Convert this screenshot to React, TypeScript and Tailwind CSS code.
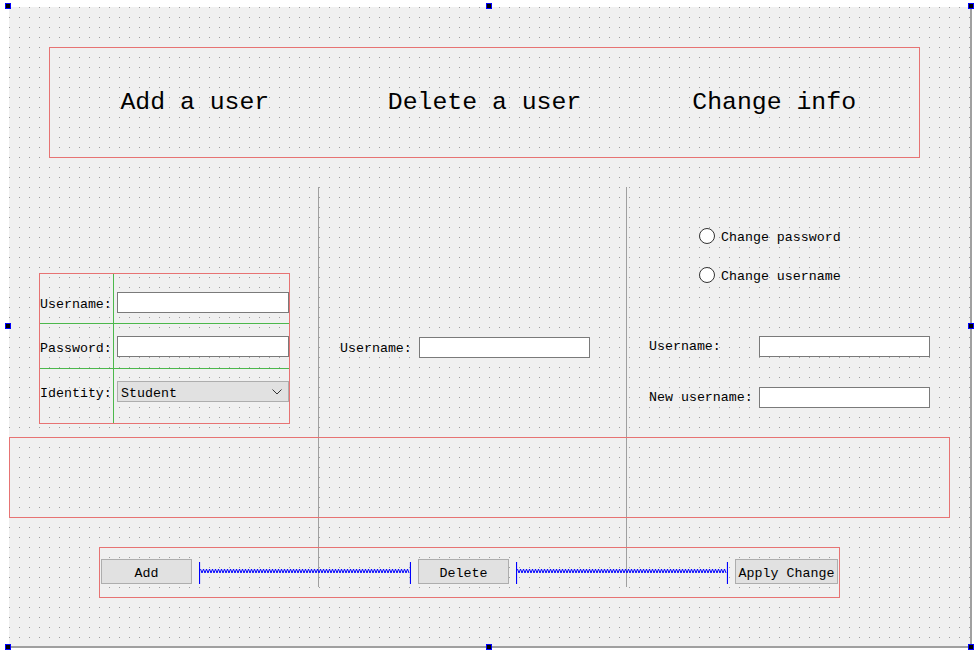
const mono = "font-['Liberation_Mono','DejaVu_Sans_Mono',monospace]";

function Handle({ className }: { className: string }) {
  return <div className={`absolute h-[6px] w-[6px] border border-[#0000ff] bg-black ${className}`} />;
}

function LineEdit({ className = '' }: { className?: string }) {
  return <div className={`h-[21px] border border-[#7a7a7a] bg-white ${className}`} />;
}

function Spacer() {
  const pts: string[] = [];
  for (let i = 0; i <= 160; i++) {
    const x = 1.5 + i * 1.5;
    if (x > 210.5) break;
    pts.push(`${x},${i % 2 === 0 ? 7 : 11}`);
  }
  return (
    <svg width="212" height="22" className="mt-[3px] shrink-0">
      <line x1="0.5" y1="0" x2="0.5" y2="22" stroke="#0000ff" strokeWidth="1.2" />
      <line x1="211.5" y1="0" x2="211.5" y2="22" stroke="#0000ff" strokeWidth="1.2" />
      <polyline points={pts.join(' ')} fill="none" stroke="#0000ff" strokeWidth="1" />
    </svg>
  );
}

function Button({ label, className }: { label: string; className: string }) {
  return (
    <div className={`flex h-[25px] items-center justify-center border border-[#adadad] bg-[#e1e1e1] text-[13.3px] text-black ${className}`}>
      <span className="translate-y-[2px]">{label}</span>
    </div>
  );
}

function Radio({ label }: { label: string }) {
  return (
    <div className="flex h-[16px] items-center gap-[6px]">
      <div className="h-[16px] w-[16px] shrink-0 rounded-full border border-[#333333] bg-white" />
      <span className="translate-y-[2px] text-[13.3px] leading-none">{label}</span>
    </div>
  );
}

function Label({ text, className = 'translate-y-[2px]' }: { text: string; className?: string }) {
  return <span className={`flex h-[21px] items-center ${className}`}>{text}</span>;
}

export default function App() {
  return (
    <div className={`relative h-[654px] w-[976px] overflow-hidden bg-white text-black ${mono}`}>
      {/* form canvas */}
      <div className="absolute left-[9px] top-[7px] h-[641px] w-[963px] border-b-2 border-r-2 border-[#a0a0a0] bg-[#a0a0a0] bg-[linear-gradient(to_bottom,transparent_1px,#f0f0f0_1px),linear-gradient(to_right,transparent_1px,#f0f0f0_1px)] bg-[length:10px_10px]">
        {/* title labels */}
        <div className="absolute left-[40px] top-[40px] flex h-[111px] w-[871px] border border-[#e77373]">
          <div className="flex flex-1 items-center justify-center text-[24.8px]">Add a user</div>
          <div className="flex flex-1 items-center justify-center text-[24.8px]">Delete a user</div>
          <div className="flex flex-1 items-center justify-center text-[24.8px]">Change info</div>
        </div>

        {/* separators */}
        <div className="absolute left-[309px] top-[180px] h-[400px] w-px bg-[#a0a0a0]" />
        <div className="absolute left-[617px] top-[180px] h-[400px] w-px bg-[#a0a0a0]" />

        {/* add user form */}
        <div className="absolute left-[30px] top-[266px] flex h-[151px] w-[251px] flex-col border border-[#e77373] text-[13.3px]">
          <div className="flex h-[50px] border-b border-[#4cb84c]">
            <div className="w-[75px] border-r border-[#4cb84c] pt-[18px]">
              <Label text="Username:" />
            </div>
            <LineEdit className="ml-[3px] mt-[18px] w-[172px] shrink-0" />
          </div>
          <div className="flex h-[45px] border-b border-[#4cb84c]">
            <div className="w-[75px] border-r border-[#4cb84c] pt-[12px]">
              <Label text="Password:" />
            </div>
            <LineEdit className="ml-[3px] mt-[12px] w-[172px] shrink-0" />
          </div>
          <div className="flex flex-1">
            <div className="w-[75px] border-r border-[#4cb84c] pt-[12px]">
              <Label text="Identity:" />
            </div>
            <div className="ml-[3px] mt-[12px] flex h-[21px] w-[172px] shrink-0 items-center justify-between border border-[#adadad] bg-[#e1e1e1] pl-[3px] pr-[6px]">
              <span className="translate-y-[2px]">Student</span>
              <svg width="10" height="6" viewBox="0 0 10 6">
                <polyline points="0.5,0.5 5,5 9.5,0.5" fill="none" stroke="#333" strokeWidth="1" />
              </svg>
            </div>
          </div>
        </div>

        {/* delete user */}
        <div className="absolute left-[331px] top-[330px] flex items-center gap-[7px] text-[13.3px]">
          <Label text="Username:" className="translate-y-[1px]" />
          <LineEdit className="w-[171px]" />
        </div>

        {/* change info */}
        <div className="absolute left-[690px] top-[221px] flex flex-col gap-[23px]">
          <Radio label="Change password" />
          <Radio label="Change username" />
        </div>
        <div className="absolute left-[640px] top-[329px] flex flex-col gap-[30px] text-[13.3px]">
          <div className="flex items-center">
            <Label text="Username:" className="w-[110px]" />
            <LineEdit className="w-[171px]" />
          </div>
          <div className="flex items-center">
            <Label text="New username:" className="w-[110px]" />
            <LineEdit className="w-[171px]" />
          </div>
        </div>

        {/* message frame */}
        <div className="absolute left-0 top-[430px] h-[81px] w-[941px] border border-[#e77373]" />

        {/* buttons */}
        <div className="absolute left-[90px] top-[540px] flex h-[51px] w-[741px] items-start gap-[7px] border border-[#e77373] pl-px pt-[11px]">
          <Button label="Add" className="w-[91px]" />
          <Spacer />
          <Button label="Delete" className="w-[91px]" />
          <Spacer />
          <Button label="Apply Change" className="w-[103px]" />
        </div>
      </div>

      {/* selection handles */}
      <Handle className="left-[5px] top-[3px]" />
      <Handle className="left-[486px] top-[3px]" />
      <Handle className="left-[968px] top-[3px]" />
      <Handle className="left-[5px] top-[323px]" />
      <Handle className="left-[968px] top-[323px]" />
      <Handle className="left-[5px] top-[644px]" />
      <Handle className="left-[486px] top-[644px]" />
      <Handle className="left-[968px] top-[644px]" />
    </div>
  );
}
